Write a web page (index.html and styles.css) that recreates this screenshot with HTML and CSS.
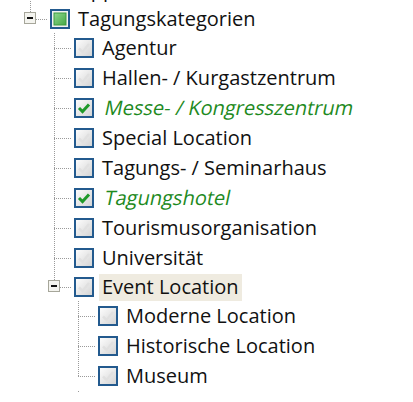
FILE: index.html
```html
<!DOCTYPE html>
<html>
<head>
<meta charset="utf-8">
<link rel="stylesheet" href="styles.css">
</head>
<body>
<svg class="defs" width="0" height="0">
  <defs>
    <linearGradient id="cbg" x1="0" y1="0" x2="1" y2="1">
      <stop offset="0" stop-color="#ffffff"/>
      <stop offset="1" stop-color="#d2d2d2"/>
    </linearGradient>
    <linearGradient id="grn" x1="0" y1="0" x2="1" y2="1">
      <stop offset="0" stop-color="#8fd88f"/>
      <stop offset="1" stop-color="#45a845"/>
    </linearGradient>
    <symbol id="cb" viewBox="0 0 20 20">
      <rect x="1" y="1" width="18" height="18" fill="url(#cbg)" stroke="#235a8e" stroke-width="2"/>
      <path d="M5 10.5 L8.5 14 L15 6" fill="none" stroke="#e0e0e0" stroke-width="2.5"/>
    </symbol>
    <symbol id="cbc" viewBox="0 0 20 20">
      <rect x="1" y="1" width="18" height="18" fill="url(#cbg)" stroke="#235a8e" stroke-width="2"/>
      <path d="M5 10 L8.5 13.5 L15 6.5" fill="none" stroke="#1f9a2a" stroke-width="3"/>
    </symbol>
    <symbol id="cbp" viewBox="0 0 20 20">
      <rect x="1" y="1" width="18" height="18" fill="#f2f2f2" stroke="#235a8e" stroke-width="2"/>
      <rect x="4" y="4" width="12" height="12" fill="url(#grn)" stroke="#3e9c3e" stroke-width="1"/>
    </symbol>
  </defs>
</svg>

<div class="tree">
  <div class="row">
    <span class="cn vfull hline"></span>
    <svg class="cb"><use href="#cb"/></svg>
    <span class="title">Appartements</span>
  </div>

  <div class="row parent">
    <span class="cn vtop hline"><span class="exp"></span></span>
    <svg class="cb"><use href="#cbp"/></svg>
    <span class="title">Tagungskategorien</span>
  </div>

  <div class="row">
    <span class="sp"></span>
    <span class="cn vfull hline"></span>
    <svg class="cb"><use href="#cb"/></svg>
    <span class="title">Agentur</span>
  </div>
  <div class="row">
    <span class="sp"></span>
    <span class="cn vfull hline"></span>
    <svg class="cb"><use href="#cb"/></svg>
    <span class="title">Hallen- / Kurgastzentrum</span>
  </div>
  <div class="row">
    <span class="sp"></span>
    <span class="cn vfull hline"></span>
    <svg class="cb"><use href="#cbc"/></svg>
    <span class="title sel">Messe- / Kongresszentrum</span>
  </div>
  <div class="row">
    <span class="sp"></span>
    <span class="cn vfull hline"></span>
    <svg class="cb"><use href="#cb"/></svg>
    <span class="title">Special Location</span>
  </div>
  <div class="row">
    <span class="sp"></span>
    <span class="cn vfull hline"></span>
    <svg class="cb"><use href="#cb"/></svg>
    <span class="title">Tagungs- / Seminarhaus</span>
  </div>
  <div class="row">
    <span class="sp"></span>
    <span class="cn vfull hline"></span>
    <svg class="cb"><use href="#cbc"/></svg>
    <span class="title sel">Tagungshotel</span>
  </div>
  <div class="row">
    <span class="sp"></span>
    <span class="cn vfull hline"></span>
    <svg class="cb"><use href="#cb"/></svg>
    <span class="title">Tourismusorganisation</span>
  </div>
  <div class="row">
    <span class="sp"></span>
    <span class="cn vfull hline"></span>
    <svg class="cb"><use href="#cb"/></svg>
    <span class="title">Universität</span>
  </div>
  <div class="row parent">
    <span class="sp"></span>
    <span class="cn vtop hline"><span class="exp"></span></span>
    <svg class="cb"><use href="#cb"/></svg>
    <span class="title active">Event Location</span>
  </div>

  <div class="row">
    <span class="sp"></span>
    <span class="sp"></span>
    <span class="cn vfull hline"></span>
    <svg class="cb"><use href="#cb"/></svg>
    <span class="title">Moderne Location</span>
  </div>
  <div class="row">
    <span class="sp"></span>
    <span class="sp"></span>
    <span class="cn vfull hline"></span>
    <svg class="cb"><use href="#cb"/></svg>
    <span class="title">Historische Location</span>
  </div>
  <div class="row">
    <span class="sp"></span>
    <span class="sp"></span>
    <span class="cn vtop hline"></span>
    <svg class="cb"><use href="#cb"/></svg>
    <span class="title">Museum</span>
  </div>
  <div class="row tail">
    <span class="sp"></span>
    <span class="sp"></span>
    <span class="cn vdot"></span>
  </div>
</div>
</body>
</html>
```

FILE: styles.css
```css
html, body {
  margin: 0;
  padding: 0;
  background: #ffffff;
  overflow: hidden;
}

body {
  font-family: "Open Sans", "Noto Sans", sans-serif;
  font-size: 20px;
  color: #111111;
}

.defs {
  position: absolute;
  width: 0;
  height: 0;
}

.tree {
  margin-top: -25px;
  padding-left: 18px;
}

.row {
  display: flex;
  align-items: center;
  height: 30px;
}

.row.parent {
  height: 28px;
}

.sp {
  flex: none;
  width: 24px;
  align-self: stretch;
}

.cn {
  flex: none;
  width: 32px;
  align-self: stretch;
  display: flex;
  align-items: center;
  background-repeat: no-repeat;
}

.cn.vfull.hline {
  background-image:
    repeating-linear-gradient(to right, #9a9a9a 0 1px, transparent 1px 2px),
    repeating-linear-gradient(to bottom, #9a9a9a 0 1px, transparent 1px 2px);
  background-size: 18px 1px, 1px 100%;
  background-position: 12px 50%, 12px 0;
}

.cn.vtop.hline {
  background-image:
    repeating-linear-gradient(to right, #9a9a9a 0 1px, transparent 1px 2px),
    repeating-linear-gradient(to bottom, #9a9a9a 0 1px, transparent 1px 2px);
  background-size: 18px 1px, 1px 50%;
  background-position: 12px 50%, 12px 0;
}

.cn.vdot {
  background-image: repeating-linear-gradient(to bottom, #9a9a9a 0 1px, transparent 1px 2px);
  background-size: 1px 2px;
  background-position: 12px 0;
}

.exp {
  box-sizing: border-box;
  width: 12px;
  height: 12px;
  margin-left: 6px;
  margin-top: -3px;
  border: 1px solid #a6a69a;
  background: #f4f4ef;
  display: flex;
  align-items: center;
  justify-content: center;
}

.exp::before {
  content: "";
  width: 6px;
  height: 2px;
  background: #111111;
}

.cb {
  flex: none;
  width: 20px;
  height: 20px;
  margin-right: 8px;
}

.title {
  white-space: nowrap;
  line-height: 26px;
  padding-bottom: 1px;
}

.title.sel {
  color: #1e8a1e;
  display: inline-block;
  transform: skewX(-12deg);
  transform-origin: 0 100%;
}

.title.active {
  background: #efebe0;
  padding: 0 3px 1px;
  margin-left: -3px;
}
```
